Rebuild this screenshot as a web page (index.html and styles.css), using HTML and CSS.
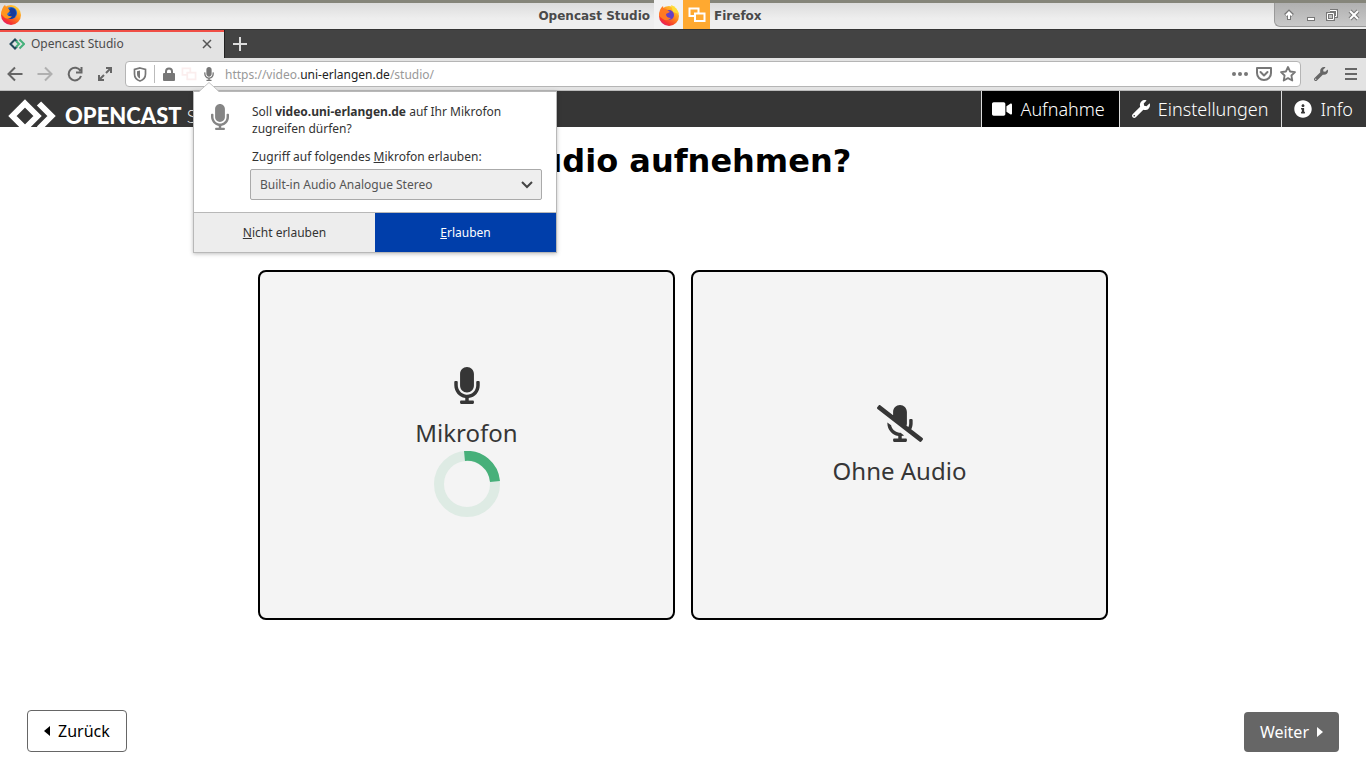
FILE: index.html
```html
<!DOCTYPE html>
<html lang="de">
<head>
<meta charset="utf-8">
<title>Opencast Studio</title>
<link rel="stylesheet" href="styles.css">
</head>
<body>
<svg class="defs" aria-hidden="true">
  <defs>
    <linearGradient id="flame" x1="0.9" y1="0" x2="0.2" y2="1">
      <stop offset="0" stop-color="#ffe23a"/><stop offset="0.45" stop-color="#ff8a1c"/><stop offset="0.8" stop-color="#f5352f"/><stop offset="1" stop-color="#e2157e"/>
    </linearGradient>
    <symbol id="mic" viewBox="0 0 352 512"><path d="M176 352c53.02 0 96-42.98 96-96V96c0-53.02-42.98-96-96-96S80 42.98 80 96v160c0 53.02 42.98 96 96 96zm160-160h-16c-8.84 0-16 7.16-16 16v48c0 74.8-64.49 134.82-140.79 127.38C96.71 376.89 48 317.11 48 250.3V208c0-8.84-7.16-16-16-16H16c-8.84 0-16 7.16-16 16v40.16c0 89.64 63.97 169.55 152 181.69V464H96c-8.84 0-16 7.16-16 16v16c0 8.84 7.16 16 16 16h160c8.84 0 16-7.16 16-16v-16c0-8.84-7.16-16-16-16h-56v-33.77C285.71 418.47 352 344.9 352 256v-48c0-8.84-7.16-16-16-16z"/></symbol>
    <symbol id="wrench" viewBox="0 0 512 512"><path d="M507.73 109.1c-2.24-9.03-13.54-12.09-20.12-5.51l-74.36 74.36-67.88-11.31-11.31-67.88 74.36-74.36c6.62-6.62 3.43-17.9-5.66-20.16-47.38-11.74-99.55.91-136.58 37.93-39.64 39.64-50.55 97.1-34.05 147.2L18.74 402.76c-24.99 24.99-24.99 65.51 0 90.5 24.99 24.99 65.51 24.99 90.5 0l213.21-213.21c50.12 16.71 107.47 5.68 147.37-34.22 37.07-37.07 49.7-89.32 37.91-136.73zM64 472c-13.25 0-24-10.75-24-24 0-13.26 10.75-24 24-24s24 10.74 24 24c0 13.25-10.75 24-24 24z"/></symbol>
    <symbol id="squares" viewBox="0 0 18 16"><path d="M7 9H1.500V1.500h9V6M7 6.500h9.500V14H7z" fill="none" stroke="currentColor" stroke-width="2"/></symbol>
  </defs>
</svg>

<div class="titlebar">
  <svg class="title-fox" viewBox="0 0 22 22"><circle cx="11" cy="12" r="10" fill="url(#flame)"/><circle cx="11" cy="10" r="6" fill="#1667d8"/><path d="M11 5q5 0 5 5t-5 6q-4 0-6-3 3 1 4-1l2-2-3-1-1-2q2 0 4-2z" fill="#173b9a"/><path d="M1 11Q2 4 5 2q1 3 3 3l2 3-3 3q1 3 5 2-2 4-7 2z" fill="#ff941f"/></svg>
  <div class="title">
    <span>Opencast Studio</span>
    <span class="fox-box"><svg width="22" height="22" viewBox="0 0 22 22"><circle cx="11" cy="12" r="10" fill="url(#flame)"/><path d="M13 1q6 2 8 9l-6-2z" fill="#ffdc35"/><circle cx="11" cy="11" r="5" fill="#6541c4"/><path d="M1 12Q1 5 5 2q0 3 3 3l4 3-4 2q0 4 5 4-4 4-8 1z" fill="#ff7a22"/></svg></span>
    <span class="squares-box"><svg width="18" height="16"><use href="#squares"/></svg></span>
    <span>Firefox</span>
  </div>
  <div class="win-buttons">
    <button aria-label="Anheften"><svg viewBox="0 0 12 12"><path d="M6 11V4M2.500 6.500L6 3l3.500 3.500" fill="none" stroke="#777" stroke-width="4"/><path d="M6 10V4M3 6.500L6 3.500l3 3" fill="none" stroke="#fff" stroke-width="2"/></svg></button>
    <button aria-label="Minimieren"><svg viewBox="0 0 12 12"><rect x="2.500" y="8.500" width="7" height="3" fill="#fff" stroke="#777"/></svg></button>
    <button aria-label="Wiederherstellen"><svg viewBox="0 0 12 12"><g fill="none" stroke="#777" stroke-width="3"><path d="M4 1.500h6.500v6H9M1.500 4.500h6v6h-6z"/></g><g fill="none" stroke="#fff"><path d="M4 1.500h6.500v6H9M1.500 4.500h6v6h-6z"/></g></svg></button>
    <button aria-label="Schließen"><svg viewBox="0 0 12 12"><path d="M2 2l8 8M10 2l-8 8" stroke="#777" stroke-width="4"/><path d="M2 2l8 8M10 2l-8 8" stroke="#fff" stroke-width="2"/></svg></button>
  </div>
</div>

<div class="tabs">
  <div class="tab">
    <svg width="16" height="12" viewBox="0 0 16 12" fill="none" stroke-width="2"><path d="M8 3.500L6 1.500 1.500 6 6 10.500 8 8.500" stroke="#234a5c"/><path d="M7 3L10 6 7 9M10.500 1.500L15 6 10.500 10.500" stroke="#45b17b"/></svg>
    <span>Opencast Studio</span>
    <button class="tab-close" aria-label="Tab schließen"><svg width="10" height="10" viewBox="0 0 10 10"><path d="M1 1l8 8M9 1L1 9" stroke="#555" stroke-width="1.500"/></svg></button>
  </div>
  <button class="tab-new" aria-label="Neuer Tab"><svg width="14" height="14" viewBox="0 0 14 14"><path d="M7 0v14M0 7h14" stroke="#ddd" stroke-width="2"/></svg></button>
</div>

<div class="toolbar">
  <button aria-label="Zurück"><svg width="16" height="16" viewBox="0 0 16 16"><path d="M15.500 8H1.500M8 1.500L1.500 8 8 14.500"/></svg></button>
  <button class="off" aria-label="Vor"><svg width="16" height="16" viewBox="0 0 16 16"><path d="M.5 8h14M8 1.500L14.500 8 8 14.500"/></svg></button>
  <button aria-label="Neu laden"><svg width="16" height="16" viewBox="0 0 16 16"><path d="M13.500 5A6.300 6.300 0 1 0 14 10M14.500 1v5.500H9"/></svg></button>
  <button aria-label="Vollbild"><svg width="16" height="16" viewBox="0 0 16 16"><path d="M9 2h5v5M14 2L9 7M7 14H2V9M2 14l5-5"/></svg></button>
  <div class="urlbar">
    <svg width="14" height="15" viewBox="0 0 14 15"><path d="M7 1l5.500 1.500V7c0 3.500-2.500 6-5.500 7-3-1-5.500-3.500-5.500-7V2.500z" fill="none" stroke="#777" stroke-width="1.700"/><path d="M7 3.500v8C5 10.500 4 9 4 7V4.300z" fill="#777"/></svg>
    <i class="url-sep"></i>
    <svg width="12" height="14" viewBox="0 0 12 14"><rect y="6" width="12" height="8" rx="1" fill="#777"/><path d="M3 7V4.500a3 3 0 0 1 6 0V7" fill="none" stroke="#777" stroke-width="2"/></svg>
    <svg class="faint" width="16" height="14"><use href="#squares"/></svg>
    <svg class="url-mic" width="10" height="14"><use href="#mic"/></svg>
    <span class="url">https://video.<b>uni-erlangen.de</b>/studio/</span>
    <div class="url-tools">
      <svg width="16" height="4" viewBox="0 0 16 4" fill="#777"><circle cx="2" cy="2" r="2"/><circle cx="8" cy="2" r="2"/><circle cx="14" cy="2" r="2"/></svg>
      <svg width="16" height="14" viewBox="0 0 16 14" fill="none" stroke="#777" stroke-width="2" stroke-linejoin="round"><path d="M1 1h14v5c0 4-3 7-7 7S1 10 1 6z"/><path d="M4.500 5L8 8.500 11.500 5" stroke-linecap="round"/></svg>
      <svg width="16" height="16" viewBox="0 0 16 16" fill="none" stroke="#777" stroke-width="1.800" stroke-linejoin="round"><path d="M8 1l2.100 4.500 4.900.6-3.600 3.400.9 5L8 12.100 3.700 14.500l.9-5L1 6.100l4.900-.6z"/></svg>
    </div>
  </div>
  <button class="tool-wrench" aria-label="Entwicklerwerkzeuge"><svg width="14" height="14"><use href="#wrench"/></svg></button>
  <button aria-label="Menü"><svg width="12" height="14" viewBox="0 0 12 14"><path d="M0 2h12M0 7h12M0 12h12"/></svg></button>
</div>

<div class="page">
  <header class="site-header">
    <a class="logo" href="#">
      <svg width="48" height="34" viewBox="0 0 48 34" fill="none" stroke="#fff" stroke-width="6"><path d="M17 4.500L29.500 17 17 29.500 4.500 17z"/><path d="M31 4.500L43.500 17 31 29.500"/></svg>
      <strong>OPENCAST</strong><span>STUDIO</span>
    </a>
    <nav class="nav">
      <a class="active" href="#"><svg width="20" height="18" viewBox="0 0 576 512"><path d="M336.200 64H47.800C21.400 64 0 85.400 0 111.800v288.400C0 426.600 21.400 448 47.800 448h288.400c26.400 0 47.800-21.400 47.800-47.800V111.800c0-26.400-21.400-47.800-47.800-47.800zm189.400 37.700L416 177.300v157.400l109.600 75.500c21.200 14.600 50.400-.3 50.400-25.800V127.500c0-25.400-29.100-40.400-50.400-25.800z"/></svg>Aufnahme</a>
      <a href="#"><svg width="18" height="18"><use href="#wrench"/></svg>Einstellungen</a>
      <a href="#"><svg width="18" height="18" viewBox="0 0 512 512"><path d="M256 8C119.043 8 8 119.083 8 256c0 136.997 111.043 248 248 248s248-111.003 248-248C504 119.083 392.957 8 256 8zm0 110c23.196 0 42 18.804 42 42s-18.804 42-42 42-42-18.804-42-42 18.804-42 42-42zm56 254c0 6.627-5.373 12-12 12h-88c-6.627 0-12-5.373-12-12v-24c0-6.627 5.373-12 12-12h12v-64h-12c-6.627 0-12-5.373-12-12v-24c0-6.627 5.373-12 12-12h64c6.627 0 12 5.373 12 12v100h12c6.627 0 12 5.373 12 12v24z"/></svg>Info</a>
    </nav>
  </header>

  <main class="main">
    <h1>Audio aufnehmen?</h1>
    <div class="choices">
      <button class="choice">
        <svg width="26" height="37"><use href="#mic"/></svg>
        <span>Mikrofon</span>
        <svg class="spinner" viewBox="0 0 66 66" fill="none" stroke-width="10"><circle cx="33" cy="33" r="28" stroke="#deebe4"/><path d="M30.500 5A28 28 0 0 1 61 30.500" stroke="#47b07a"/></svg>
      </button>
      <button class="choice">
        <svg width="46" height="37" viewBox="0 0 640 512"><path d="M633.820 458.100l-157.800-121.960C488.610 312.130 496 285.010 496 256v-48c0-8.840-7.160-16-16-16h-16c-8.840 0-16 7.160-16 16v48c0 17.920-3.960 34.800-10.720 50.200l-26.550-20.520c3.100-9.400 5.280-19.220 5.280-29.670V96c0-53.020-42.980-96-96-96s-96 42.980-96 96v45.360L45.470 3.370C38.490-2.050 28.430-.8 23.010 6.180L3.370 31.450C-2.050 38.420-.8 48.470 6.180 53.900l588.360 454.730c6.980 5.430 17.030 4.170 22.460-2.810l19.640-25.270c5.410-6.970 4.160-17.020-2.820-22.450zM400 464h-56v-33.770c11.660-1.600 22.850-4.540 33.670-8.310l-50.110-38.730c-6.710.4-13.410.87-20.350.2-55.850-5.450-98.740-48.630-111.180-101.850L144 241.310v6.850c0 89.640 63.970 169.550 152 181.690V464h-56c-8.840 0-16 7.160-16 16v16c0 8.840 7.160 16 16 16h160c8.840 0 16-7.160 16-16v-16c0-8.840-7.160-16-16-16z"/></svg>
        <span>Ohne Audio</span>
      </button>
    </div>
    <div class="steps">
      <button class="back"><svg width="6" height="10" viewBox="0 0 6 10"><path d="M6 0v10L0 5z"/></svg>Zurück</button>
      <button class="next">Weiter<svg width="6" height="10" viewBox="0 0 6 10"><path d="M0 0v10l6-5z"/></svg></button>
    </div>
  </main>

  <form class="popup">
    <svg class="popup-arrow" width="20" height="10" viewBox="0 0 20 10"><path d="M0 10L10 0l10 10z" fill="#fff"/><path d="M0 9.500L10 .5l10 9" fill="none" stroke="#c4c4c4"/></svg>
    <div class="popup-body">
      <svg class="popup-mic" width="18" height="28"><use href="#mic"/></svg>
      <div class="popup-text">
        <p>Soll <b>video.uni-erlangen.de</b> auf Ihr Mikrofon zugreifen dürfen?</p>
        <label for="device">Zugriff auf folgendes <u>M</u>ikrofon erlauben:</label>
        <div class="device">
          <select id="device"><option>Built-in Audio Analogue Stereo</option></select>
          <svg width="12" height="8" viewBox="0 0 12 8"><path d="M1 1l5 5 5-5" fill="none" stroke="#444" stroke-width="2"/></svg>
        </div>
      </div>
    </div>
    <div class="popup-actions">
      <button type="button"><u>N</u>icht erlauben</button>
      <button type="button" class="primary"><u>E</u>rlauben</button>
    </div>
  </form>
</div>
</body>
</html>
```
FILE: styles.css
```css
* { box-sizing: border-box; }
body {
  margin: 0;
  min-height: 100vh;
  display: flex;
  flex-direction: column;
  background: #fff;
  font: 12px/17px "Noto Sans", sans-serif;
  color: #333;
}
button { margin: 0; padding: 0; border: 0; background: none; font: inherit; color: inherit; }
svg { flex: none; display: block; }
.defs { position: absolute; width: 0; height: 0; }

.titlebar {
  height: 29px;
  display: flex;
  background: linear-gradient(#dcdcdc, #eee 60%);
  border-top: 3px solid #85857a;
}
.title-fox { width: 22px; height: 22px; margin-right: 4px; }
.title {
  flex: 1;
  display: flex;
  align-items: center;
  justify-content: center;
  gap: 4px;
  font: bold 12px/20px "DejaVu Sans", sans-serif;
  color: #4a4a4a;
}
.fox-box, .squares-box {
  height: 29px;
  width: 29px;
  margin-top: -3px;
  display: flex;
  align-items: center;
  justify-content: center;
  background: #f2f2f2;
}
.squares-box { width: 27px; background: #ffa930; color: #fff; margin-left: -4px; }
.win-buttons {
  width: 92px;
  height: 24px;
  display: flex;
  align-items: center;
  justify-content: space-around;
  padding: 0 1px 0 3px;
  background: linear-gradient(#b0b0b0, #c9c9c9);
  border: 1px solid #999;
  border-width: 0 0 1px 1px;
  border-bottom-left-radius: 6px;
}
.win-buttons svg { width: 12px; height: 12px; }

.tabs { height: 29px; display: flex; background: #434343; border-top: 1px solid #333; }
.tab {
  width: 224px;
  display: flex;
  align-items: center;
  gap: 6px;
  padding: 0 12px 3px 9px;
  background: #e3e3e3;
  border-top: 2px solid #f04e45;
  color: #4c4c4c;
}
.tab-close { margin-left: auto; }
.tab-new { width: 31px; display: flex; align-items: center; justify-content: center; border-left: 1px solid #222; }

.toolbar {
  height: 33px;
  display: flex;
  align-items: center;
  background: #e3e3e3;
  border-bottom: 1px solid #bbb;
}
.toolbar > button { width: 30px; height: 30px; display: flex; align-items: center; justify-content: center; }
.toolbar > button path { fill: none; stroke: #666; stroke-width: 2; }
.toolbar > .off path { stroke: #b0b0b0; }
.toolbar > .tool-wrench { margin-left: 5px; fill: #666; }
.urlbar {
  flex: 1;
  height: 26px;
  margin-left: 5px;
  padding: 0 4px 0 7px;
  display: flex;
  align-items: center;
  gap: 8px;
  background: #fff;
  border: 1px solid #b5b5b5;
  border-radius: 4px;
}
.url-sep { width: 1px; height: 18px; margin-left: -1px; background: #bbb; }
.faint { color: #fbeeee; margin-left: -2px; }
.url-mic { fill: #777; margin-left: -1px; }
.url { color: #999; margin-left: 3px; }
.url b { font-weight: normal; color: #222; }
.url-tools { margin-left: auto; display: flex; align-items: center; gap: 8px; }

.page { position: relative; flex: 1; display: flex; flex-direction: column; }
.site-header {
  height: 36px;
  display: flex;
  justify-content: space-between;
  background: #363636;
  overflow: hidden;
}
.logo {
  display: flex;
  height: 50px;
  align-items: center;
  color: #fff;
  text-decoration: none;
  font: 22px/30px Lato, sans-serif;
  padding-left: 8px;
}
.logo strong { font-weight: 900; margin: 0 5px 0 9px; }
.logo span { font-size: 18px; font-weight: 300; }
.nav { display: flex; }
.nav a {
  display: flex;
  align-items: center;
  gap: 8px;
  padding: 0 14px 0 12px;
  border-left: 1px solid #ddd;
  font: 300 18px/36px "Noto Sans", sans-serif;
  color: #fff;
  text-decoration: none;
}
.nav svg { fill: #fff; }
.nav .active { background: #000; padding-left: 10px; }
.nav a + a { padding-right: 13px; }

.main { flex: 1; display: flex; flex-direction: column; color: #363636; font-size: 16px; }
h1 {
  margin: 11px 0 0;
  font: bold 32px/46px "DejaVu Sans", sans-serif;
  color: #000;
  text-align: center;
}
.choices {
  flex: 1;
  width: 100%;
  max-width: 850px;
  margin: 0 auto;
  display: flex;
  align-items: center;
  gap: 16px;
}
.choice {
  flex: 1;
  height: 350px;
  display: flex;
  flex-direction: column;
  align-items: center;
  justify-content: center;
  background: #f4f4f4;
  border: 2px solid #000;
  border-radius: 8px;
  font-size: 24px;
  line-height: 28px;
  fill: #363636;
}
.choice span { margin-top: 15px; }
.spinner { width: 66px; height: 66px; margin: 4px 0 6px; }
.steps { display: flex; align-items: flex-end; justify-content: space-between; padding: 4px 27px 16px; }
.steps button {
  display: flex;
  align-items: center;
  gap: 8px;
  height: 40px;
  padding: 0 16px;
  border-radius: 4px;
}
.steps .back { height: 42px; color: #000; background: #fff; border: 1px solid #666; }
.steps .next { background: #666; color: #fff; fill: #fff; }

.popup {
  position: absolute;
  top: 0;
  left: 193px;
  width: 364px;
  background: #fff;
  border: 1px solid #b8b8b8;
  box-shadow: 0 1px 4px rgba(0, 0, 0, 0.25);
}
.popup-arrow { position: absolute; top: -10px; left: 5px; }
.popup-body { display: flex; gap: 21px; padding: 11px 14px 12px 17px; }
.popup-mic { fill: #858585; }
.popup-text { flex: 1; }
.popup p { margin: 0 0 11px; padding-left: 2px; }
.popup label { display: block; padding-left: 2px; }
.device { position: relative; margin-top: 4px; }
.device select {
  display: block;
  appearance: none;
  width: 100%;
  height: 31px;
  padding: 0 9px;
  font: inherit;
  color: #555;
  background: #eee;
  border: 1px solid #aaa;
  border-radius: 2px;
}
.device svg { position: absolute; right: 9px; top: 12px; }
.popup-actions { display: flex; height: 40px; border-top: 1px solid #b8b8b8; }
.popup-actions button { flex: 1; background: #ededed; }
.popup-actions .primary { background: #003eaa; color: #fff; }
```
